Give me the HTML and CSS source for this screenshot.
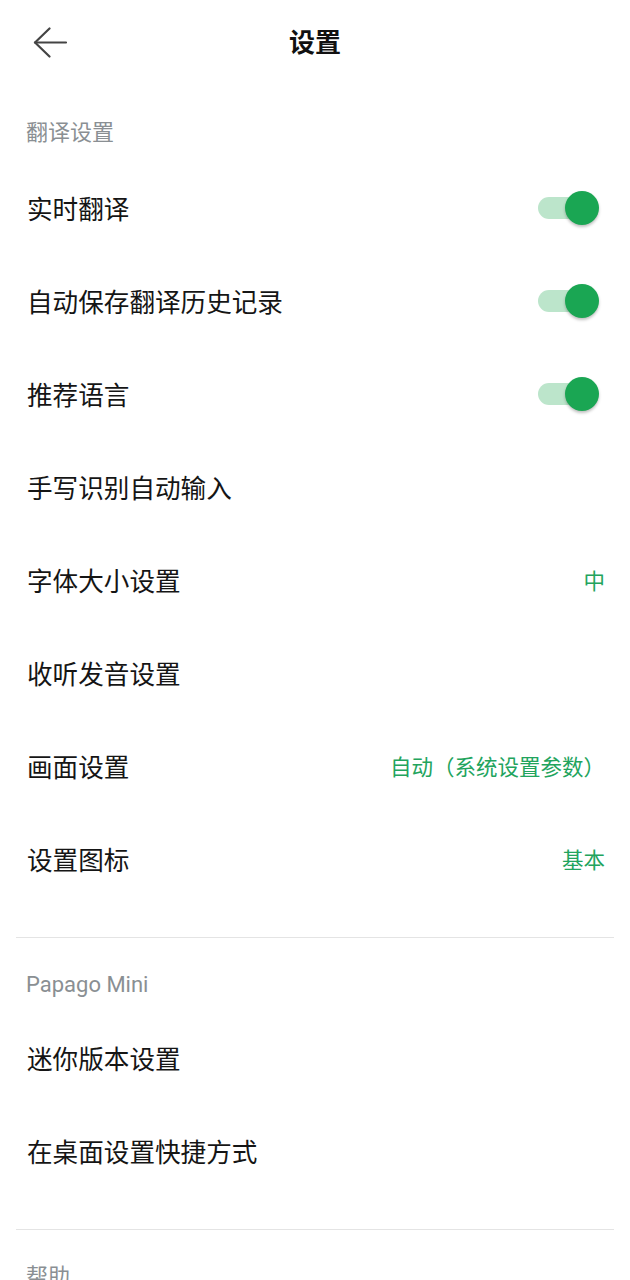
FILE: index.html
```html
<!DOCTYPE html>
<html lang="zh-CN">
<head>
  <meta charset="UTF-8" />
  <title>设置</title>
  <link rel="stylesheet" href="styles.css">
</head>
<body>
  <div class="topbar">
    <div class="back">
      <svg width="36" height="32" viewBox="0 0 36 32" fill="none" stroke="#444" stroke-width="2.2" stroke-linecap="round" stroke-linejoin="round">
        <path d="M33 15.5H2" />
        <path d="M16.5 1.5L2 15.5L16.5 29.5" />
      </svg>
    </div>
    <h1 class="title">设置</h1>
    <div></div>
  </div>

  <div class="group">
    <div class="group-title">翻译设置</div>
    <div class="row"><span>实时翻译</span><div class="switch"></div></div>
    <div class="row"><span>自动保存翻译历史记录</span><div class="switch"></div></div>
    <div class="row"><span>推荐语言</span><div class="switch"></div></div>
    <div class="row"><span>手写识别自动输入</span></div>
    <div class="row"><span>字体大小设置</span><span class="value">中</span></div>
    <div class="row"><span>收听发音设置</span></div>
    <div class="row"><span>画面设置</span><span class="value">自动（系统设置参数）</span></div>
    <div class="row"><span>设置图标</span><span class="value">基本</span></div>
  </div>

  <div class="divider"></div>

  <div class="group">
    <div class="group-title tight">Papago Mini</div>
    <div class="row"><span>迷你版本设置</span></div>
    <div class="row"><span>在桌面设置快捷方式</span></div>
  </div>

  <div class="divider"></div>

  <div class="group">
    <div class="group-title">帮助</div>
  </div>
</body>
</html>
```

FILE: styles.css
```css
body {
  margin: 0;
  background-color: #fff;
  font-family: Roboto, "Noto Sans CJK SC", sans-serif;
  color: #151515;
}
.topbar {
  height: 86px;
  display: grid;
  grid-template-columns: 1fr auto 1fr;
  align-items: center;
}
.back {
  padding-left: 33px;
  display: flex;
  align-items: center;
}
.title {
  margin: 0;
  font-size: 26px;
  font-weight: 700;
  color: #111;
  line-height: 1;
}
.group {
  padding-bottom: 32px;
}
.group-title {
  padding: 24px 26px 5px;
  line-height: 46px;
  font-size: 22px;
  color: #8a8f93;
}
.group-title.tight {
  padding-bottom: 3px;
}
.row {
  height: 93px;
  padding: 0 25px 0 27px;
  display: flex;
  align-items: center;
  justify-content: space-between;
  font-size: 25.6px;
}
.value {
  font-size: 21.5px;
  color: #22a45d;
}
.switch {
  position: relative;
  width: 61px;
  height: 34px;
  margin-right: 6px;
}
.switch::before {
  content: "";
  position: absolute;
  left: 0;
  top: 6px;
  width: 54px;
  height: 22px;
  border-radius: 11px;
  background-color: #bce5cb;
}
.switch::after {
  content: "";
  position: absolute;
  right: 0;
  top: 0;
  width: 34px;
  height: 34px;
  border-radius: 50%;
  background-color: #1aa653;
  box-shadow: 0 2px 3px rgba(0, 0, 0, 0.25);
}
.divider {
  height: 1px;
  margin: 0 16px;
  background-color: #e4e4e4;
}
```
